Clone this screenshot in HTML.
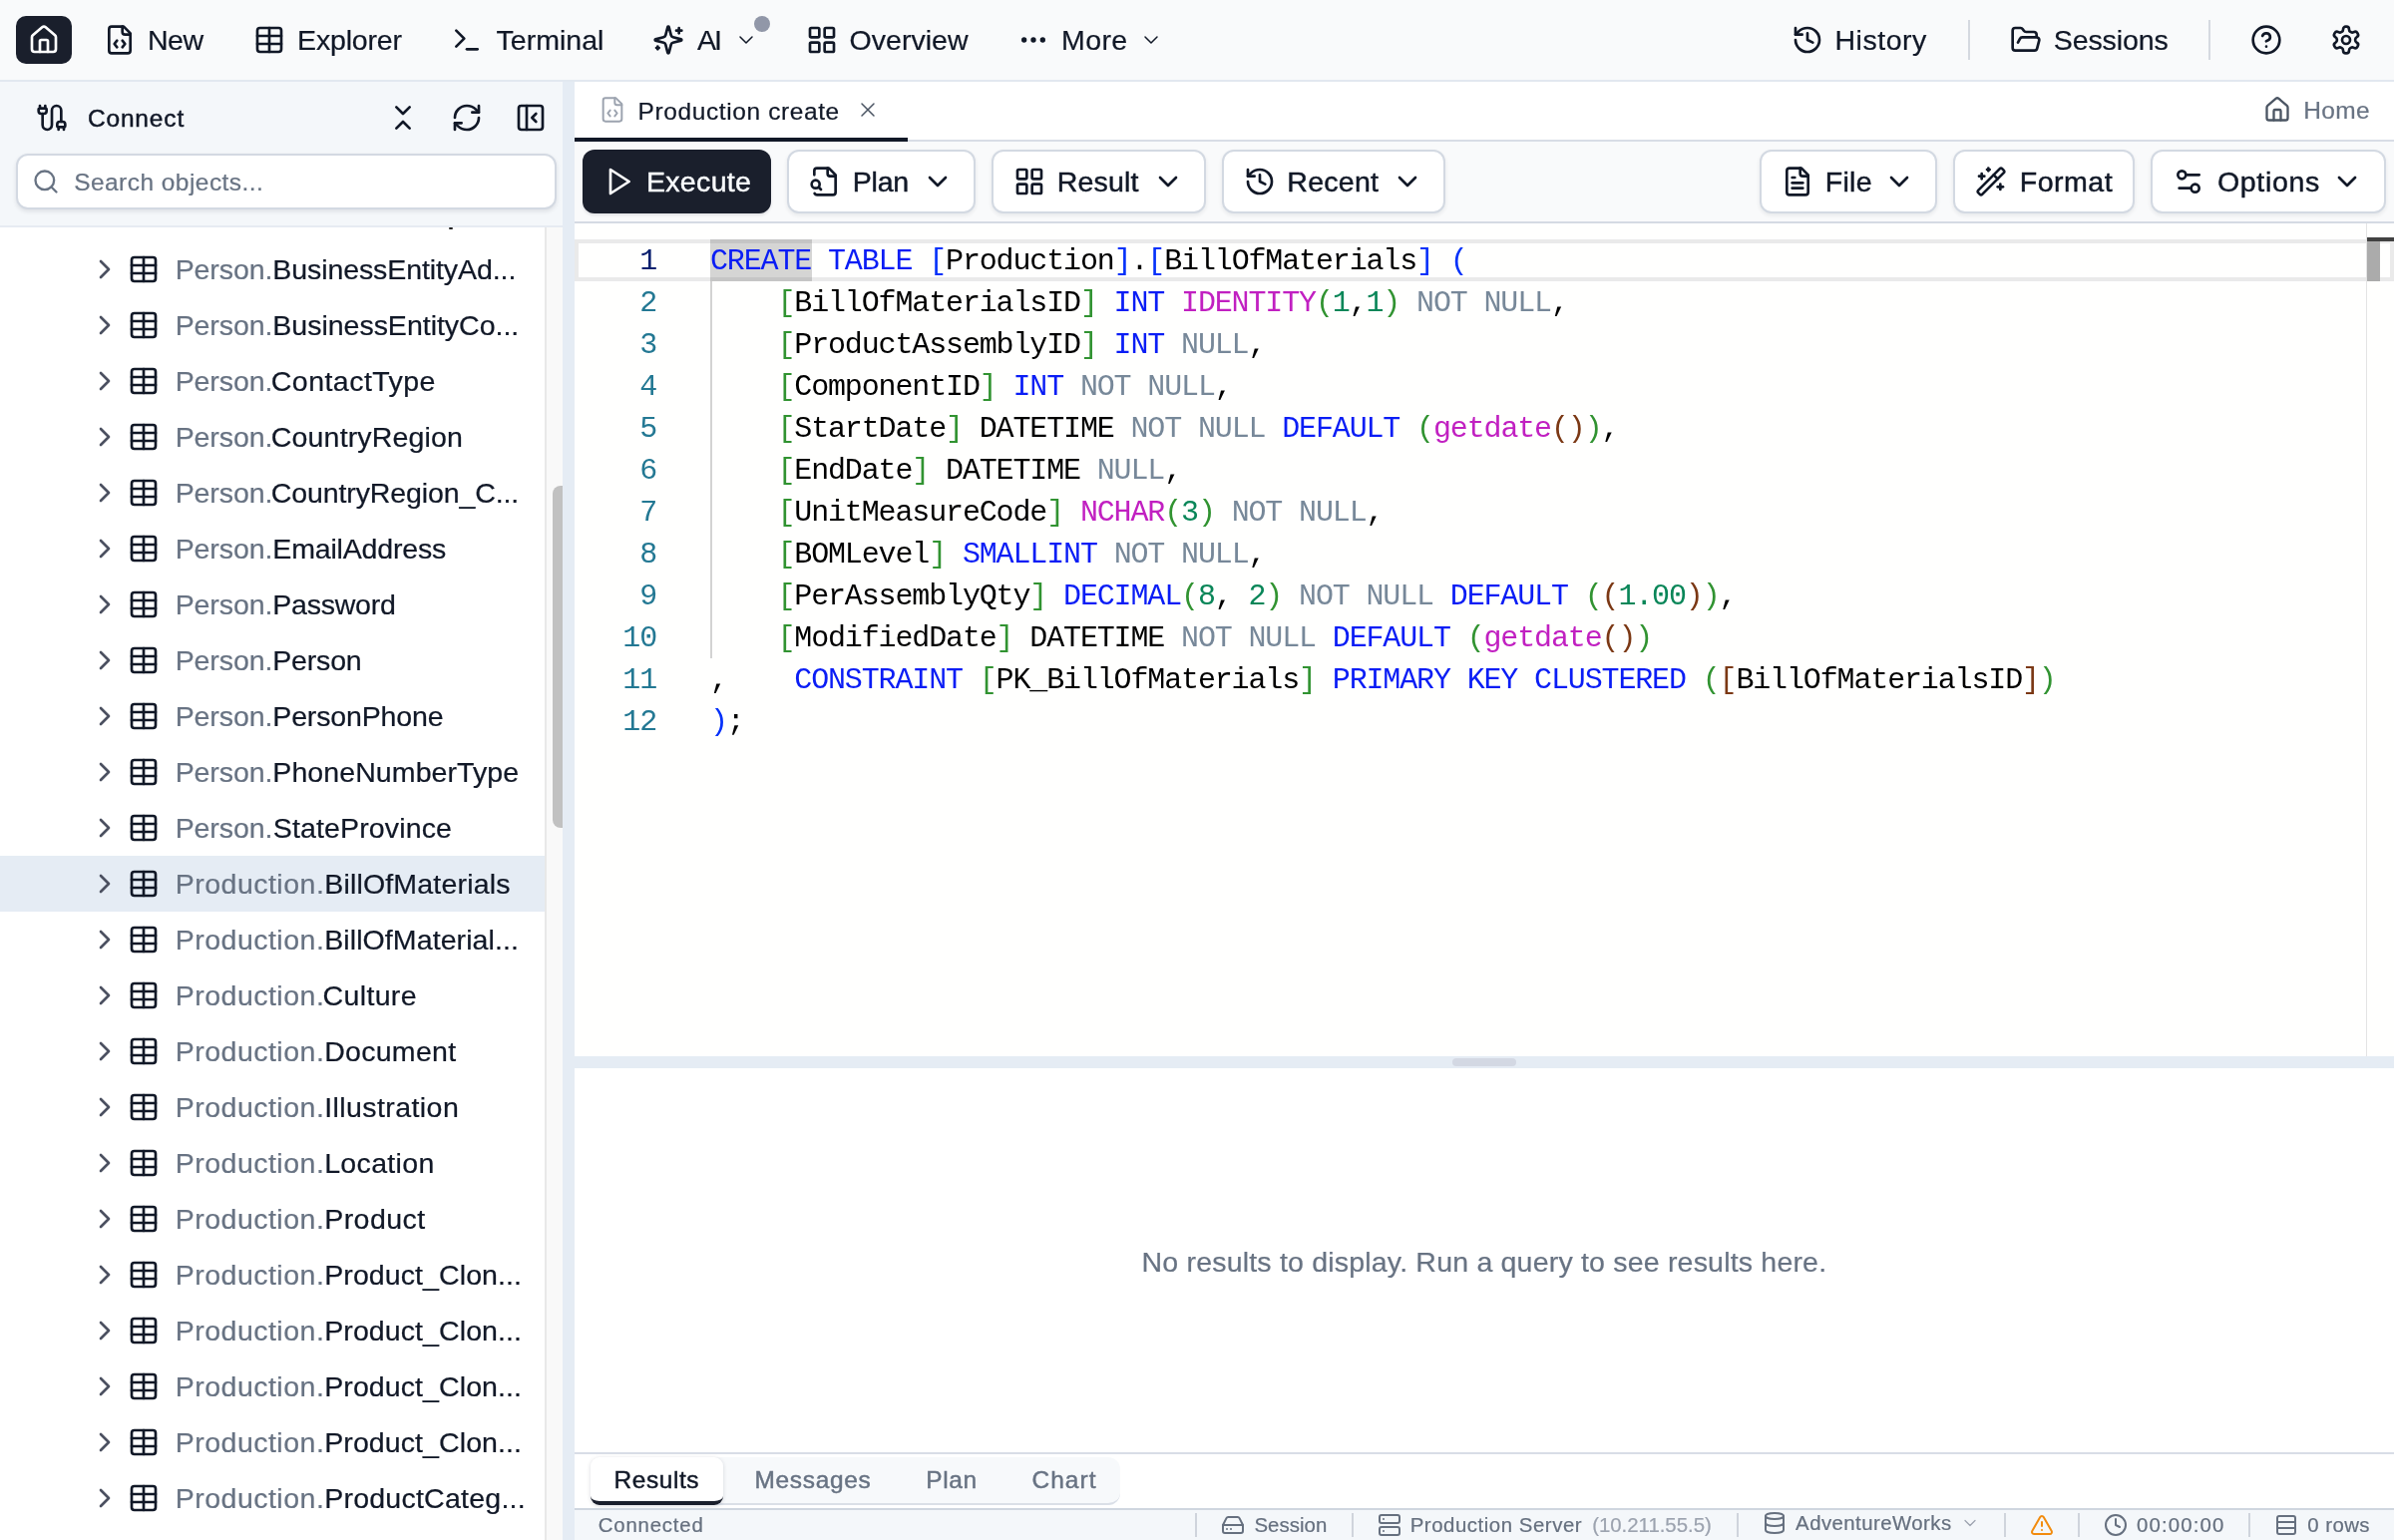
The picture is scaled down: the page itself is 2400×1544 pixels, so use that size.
<!DOCTYPE html>
<html><head><meta charset="utf-8"><title>SQL Editor</title>
<style>
html,body{margin:0;padding:0;}
body{width:2400px;height:1544px;position:relative;overflow:hidden;background:#ffffff;font-family:"Liberation Sans",sans-serif;}
#root{position:absolute;left:0;top:0;width:2400px;height:1544px;will-change:transform;}
.b{position:absolute;}
.ic{position:absolute;fill:none;stroke:currentColor;stroke-linecap:round;stroke-linejoin:round;overflow:visible;}
.t{position:absolute;white-space:pre;line-height:40px;height:40px;}
.t{-webkit-text-stroke:0.22px currentColor;}
.med{-webkit-text-stroke:0.45px currentColor;}
.ln{position:absolute;left:576px;width:82px;text-align:right;height:42px;line-height:42px;font-family:"Liberation Mono",monospace;font-size:30px;letter-spacing:-1.145px;}
.cl{position:absolute;left:712px;height:42px;line-height:42px;font-family:"Liberation Mono",monospace;font-size:30px;white-space:pre;letter-spacing:-1.145px;}
</style></head>
<body>
<div id="root">
<div class="b" style="left:0px;top:0px;width:2400px;height:80px;background:#f9fafb;"></div>
<div class="b" style="left:0px;top:80px;width:2400px;height:2px;background:#e2e8f0;"></div>
<div class="b" style="left:16px;top:16px;width:56px;height:48px;background:#1a1f2c;border-radius:10px;"></div>
<svg class="ic" style="left:28px;top:24px;width:32px;height:32px;color:#ffffff;" viewBox="0 0 24 24" stroke-width="2"><path d="M15 21v-8a1 1 0 0 0-1-1h-4a1 1 0 0 0-1 1v8"/><path d="M3 10a2 2 0 0 1 .709-1.528l7-5.999a2 2 0 0 1 2.582 0l7 5.999A2 2 0 0 1 21 10v9a2 2 0 0 1-2 2H5a2 2 0 0 1-2-2z"/></svg>
<svg class="ic" style="left:104px;top:24px;width:32px;height:32px;color:#111827;" viewBox="0 0 24 24" stroke-width="2"><path d="M10 12.5 8 15l2 2.5"/><path d="m14 12.5 2 2.5-2 2.5"/><path d="M14 2v4a2 2 0 0 0 2 2h4"/><path d="M15 2H6a2 2 0 0 0-2 2v16a2 2 0 0 0 2 2h12a2 2 0 0 0 2-2V7z"/></svg>
<div class="t " style="left:147.90px;top:20px;font-size:28.56px;color:#111827;letter-spacing:-0.396px;">New</div>
<svg class="ic" style="left:254px;top:24px;width:32px;height:32px;color:#111827;" viewBox="0 0 24 24" stroke-width="2"><path d="M12 3v18"/><rect width="18" height="18" x="3" y="3" rx="2"/><path d="M3 9h18"/><path d="M3 15h18"/></svg>
<div class="t " style="left:298.10px;top:20px;font-size:28.56px;color:#111827;letter-spacing:-0.199px;">Explorer</div>
<svg class="ic" style="left:451.75px;top:24px;width:32px;height:32px;color:#111827;" viewBox="0 0 24 24" stroke-width="2"><polyline points="4 17 10 11 4 5"/><line x1="12" x2="20" y1="19" y2="19"/></svg>
<div class="t " style="left:497.50px;top:20px;font-size:28.56px;color:#111827;letter-spacing:-0.004px;">Terminal</div>
<svg class="ic" style="left:654px;top:24px;width:32px;height:32px;color:#111827;" viewBox="0 0 24 24" stroke-width="2"><path d="M9.937 15.5A2 2 0 0 0 8.5 14.063l-6.135-1.582a.5.5 0 0 1 0-.962L8.5 9.936A2 2 0 0 0 9.937 8.5l1.582-6.135a.5.5 0 0 1 .963 0L14.063 8.5A2 2 0 0 0 15.5 9.937l6.135 1.581a.5.5 0 0 1 0 .964L15.5 14.063a2 2 0 0 0-1.437 1.437l-1.582 6.135a.5.5 0 0 1-.963 0z"/><path d="M20 3v4"/><path d="M22 5h-4"/><path d="M4 17v2"/><path d="M5 18H3"/></svg>
<div class="t " style="left:699.00px;top:20px;font-size:28.56px;color:#111827;letter-spacing:-2.041px;">AI</div>
<svg class="ic" style="left:736.25px;top:27.75px;width:24px;height:24px;color:#111827;" viewBox="0 0 24 24" stroke-width="1.5"><path d="m6 9 6 6 6-6"/></svg>
<div class="b" style="left:756px;top:16px;width:16px;height:16px;background:#9197a8;border-radius:50%;"></div>
<svg class="ic" style="left:808px;top:24px;width:32px;height:32px;color:#111827;" viewBox="0 0 24 24" stroke-width="2"><rect width="7" height="7" x="3" y="3" rx="1"/><rect width="7" height="7" x="14" y="3" rx="1"/><rect width="7" height="7" x="14" y="14" rx="1"/><rect width="7" height="7" x="3" y="14" rx="1"/></svg>
<div class="t " style="left:851.60px;top:20px;font-size:28.56px;color:#111827;letter-spacing:0.007px;">Overview</div>
<svg class="ic" style="left:1019.75px;top:24px;width:32px;height:32px;color:#111827;" viewBox="0 0 24 24" stroke-width="2"><circle cx="12" cy="12" r="1"/><circle cx="19" cy="12" r="1"/><circle cx="5" cy="12" r="1"/></svg>
<div class="t " style="left:1064.00px;top:20px;font-size:28.56px;color:#111827;letter-spacing:0.379px;">More</div>
<svg class="ic" style="left:1141.5px;top:27.75px;width:24px;height:24px;color:#111827;" viewBox="0 0 24 24" stroke-width="1.5"><path d="m6 9 6 6 6-6"/></svg>
<svg class="ic" style="left:1795.5px;top:24px;width:32px;height:32px;color:#111827;" viewBox="0 0 24 24" stroke-width="2"><path d="M3 12a9 9 0 1 0 9-9 9.75 9.75 0 0 0-6.74 2.74L3 8"/><path d="M3 3v5h5"/><path d="M12 7v5l4 2"/></svg>
<div class="t " style="left:1839.50px;top:20px;font-size:28.56px;color:#111827;letter-spacing:0.492px;">History</div>
<div class="b" style="left:1973px;top:20px;width:2px;height:40px;background:#d5d9e0;"></div>
<svg class="ic" style="left:2014.5px;top:24px;width:32px;height:32px;color:#111827;" viewBox="0 0 24 24" stroke-width="2"><path d="m6 14 1.5-2.9A2 2 0 0 1 9.24 10H20a2 2 0 0 1 1.94 2.5l-1.54 6a2 2 0 0 1-1.95 1.5H4a2 2 0 0 1-2-2V5a2 2 0 0 1 2-2h3.9a2 2 0 0 1 1.69.9l.81 1.2a2 2 0 0 0 1.67.9H18a2 2 0 0 1 2 2v2"/></svg>
<div class="t " style="left:2058.80px;top:20px;font-size:28.56px;color:#111827;letter-spacing:-0.137px;">Sessions</div>
<div class="b" style="left:2214px;top:20px;width:2px;height:40px;background:#d5d9e0;"></div>
<svg class="ic" style="left:2256px;top:24px;width:32px;height:32px;color:#111827;" viewBox="0 0 24 24" stroke-width="2"><circle cx="12" cy="12" r="10"/><path d="M9.09 9a3 3 0 0 1 5.83 1c0 2-3 3-3 3"/><path d="M12 17h.01"/></svg>
<svg class="ic" style="left:2336px;top:24px;width:32px;height:32px;color:#111827;" viewBox="0 0 24 24" stroke-width="2"><path d="M12.22 2h-.44a2 2 0 0 0-2 2v.18a2 2 0 0 1-1 1.73l-.43.25a2 2 0 0 1-2 0l-.15-.08a2 2 0 0 0-2.73.73l-.22.38a2 2 0 0 0 .73 2.73l.15.1a2 2 0 0 1 1 1.72v.51a2 2 0 0 1-1 1.74l-.15.09a2 2 0 0 0-.73 2.73l.22.38a2 2 0 0 0 2.73.73l.15-.08a2 2 0 0 1 2 0l.43.25a2 2 0 0 1 1 1.73V20a2 2 0 0 0 2 2h.44a2 2 0 0 0 2-2v-.18a2 2 0 0 1 1-1.73l.43-.25a2 2 0 0 1 2 0l.15.08a2 2 0 0 0 2.73-.73l.22-.39a2 2 0 0 0-.73-2.73l-.15-.08a2 2 0 0 1-1-1.74v-.5a2 2 0 0 1 1-1.74l.15-.09a2 2 0 0 0 .73-2.73l-.22-.38a2 2 0 0 0-2.73-.73l-.15.08a2 2 0 0 1-2 0l-.43-.25a2 2 0 0 1-1-1.73V4a2 2 0 0 0-2-2z"/><circle cx="12" cy="12" r="3"/></svg>
<div class="b" style="left:0px;top:82px;width:564px;height:144px;background:#f4f7fa;"></div>
<div class="b" style="left:0px;top:226px;width:564px;height:2px;background:#e6ebf2;"></div>
<div class="b" style="left:0px;top:228px;width:546px;height:1316px;background:#ffffff;"></div>
<div class="b" style="left:546px;top:228px;width:18px;height:1316px;background:#f9f9f9;border-left:2px solid #e8e8e8;box-sizing:border-box;"></div>
<div class="b" style="left:554px;top:487px;width:10px;height:343px;background:#c1c1c1;border-radius:8px 0 0 8px;"></div>
<div class="b" style="left:564px;top:82px;width:12px;height:1462px;background:#e5ecf4;"></div>
<svg class="ic" style="left:36px;top:102px;width:32px;height:32px;color:#111827;" viewBox="0 0 24 24" stroke-width="2"><path d="M17 21v-2a1 1 0 0 1-1-1v-1a2 2 0 0 1 2-2h2a2 2 0 0 1 2 2v1a1 1 0 0 1-1 1"/><path d="M19 15V6.5a1 1 0 0 0-7 0v11a1 1 0 0 1-7 0V9"/><path d="M21 21v-2h-4"/><path d="M3 5h4V3"/><path d="M7 5a1 1 0 0 1 1 1v1a2 2 0 0 1-2 2H4a2 2 0 0 1-2-2V6a1 1 0 0 1 1-1V3"/></svg>
<div class="t med" style="left:87.90px;top:99px;font-size:24.48px;color:#111827;letter-spacing:0.860px;">Connect</div>
<svg class="ic" style="left:388.25px;top:102px;width:32px;height:32px;color:#111827;" viewBox="0 0 24 24" stroke-width="2"><path d="m7 20 5-5 5 5"/><path d="m7 4 5 5 5-5"/></svg>
<svg class="ic" style="left:452.25px;top:102px;width:32px;height:32px;color:#111827;" viewBox="0 0 24 24" stroke-width="2"><path d="M3 12a9 9 0 0 1 9-9 9.75 9.75 0 0 1 6.74 2.74L21 8"/><path d="M21 3v5h-5"/><path d="M21 12a9 9 0 0 1-9 9 9.75 9.75 0 0 1-6.74-2.74L3 16"/><path d="M8 16H3v5"/></svg>
<svg class="ic" style="left:516.25px;top:102px;width:32px;height:32px;color:#111827;" viewBox="0 0 24 24" stroke-width="2"><rect width="18" height="18" x="3" y="3" rx="2"/><path d="M9 3v18"/><path d="m16 15-3-3 3-3"/></svg>
<div class="b" style="left:16px;top:154px;width:542px;height:56px;background:#fff;border:2px solid #d3d9e2;border-radius:12px;box-sizing:border-box;box-shadow:0 2px 4px rgba(15,23,42,.10);"></div>
<svg class="ic" style="left:32px;top:168px;width:28px;height:28px;color:#687383;" viewBox="0 0 24 24" stroke-width="2"><circle cx="11" cy="11" r="8"/><path d="m21 21-4.3-4.3"/></svg>
<div class="t " style="left:74.20px;top:163px;font-size:24.48px;color:#687383;letter-spacing:0.466px;">Search objects...</div>
<div class="b" style="left:450px;top:228px;width:4px;height:1.5px;background:#222;border-radius:1px;"></div>
<svg class="ic" style="left:88.5px;top:254px;width:32px;height:32px;color:#4b5060;" viewBox="0 0 24 24" stroke-width="2"><path d="m9 18 6-6-6-6"/></svg>
<svg class="ic" style="left:128px;top:254px;width:32px;height:32px;color:#111827;" viewBox="0 0 24 24" stroke-width="2"><path d="M12 3v18"/><rect width="18" height="18" x="3" y="3" rx="2"/><path d="M3 9h18"/><path d="M3 15h18"/></svg>
<div class="t " style="left:175.70px;top:250px;font-size:28.56px;color:#687383;letter-spacing:-0.125px;">Person.</div>
<div class="t " style="left:273.30px;top:250px;font-size:28.56px;color:#111827;letter-spacing:-0.106px;">BusinessEntityAd...</div>
<svg class="ic" style="left:88.5px;top:310px;width:32px;height:32px;color:#4b5060;" viewBox="0 0 24 24" stroke-width="2"><path d="m9 18 6-6-6-6"/></svg>
<svg class="ic" style="left:128px;top:310px;width:32px;height:32px;color:#111827;" viewBox="0 0 24 24" stroke-width="2"><path d="M12 3v18"/><rect width="18" height="18" x="3" y="3" rx="2"/><path d="M3 9h18"/><path d="M3 15h18"/></svg>
<div class="t " style="left:175.70px;top:306px;font-size:28.56px;color:#687383;letter-spacing:-0.125px;">Person.</div>
<div class="t " style="left:273.30px;top:306px;font-size:28.56px;color:#111827;letter-spacing:-0.032px;">BusinessEntityCo...</div>
<svg class="ic" style="left:88.5px;top:366px;width:32px;height:32px;color:#4b5060;" viewBox="0 0 24 24" stroke-width="2"><path d="m9 18 6-6-6-6"/></svg>
<svg class="ic" style="left:128px;top:366px;width:32px;height:32px;color:#111827;" viewBox="0 0 24 24" stroke-width="2"><path d="M12 3v18"/><rect width="18" height="18" x="3" y="3" rx="2"/><path d="M3 9h18"/><path d="M3 15h18"/></svg>
<div class="t " style="left:175.70px;top:362px;font-size:28.56px;color:#687383;letter-spacing:-0.125px;">Person.</div>
<div class="t " style="left:271.80px;top:362px;font-size:28.56px;color:#111827;letter-spacing:0.441px;">ContactType</div>
<svg class="ic" style="left:88.5px;top:422px;width:32px;height:32px;color:#4b5060;" viewBox="0 0 24 24" stroke-width="2"><path d="m9 18 6-6-6-6"/></svg>
<svg class="ic" style="left:128px;top:422px;width:32px;height:32px;color:#111827;" viewBox="0 0 24 24" stroke-width="2"><path d="M12 3v18"/><rect width="18" height="18" x="3" y="3" rx="2"/><path d="M3 9h18"/><path d="M3 15h18"/></svg>
<div class="t " style="left:175.70px;top:418px;font-size:28.56px;color:#687383;letter-spacing:-0.125px;">Person.</div>
<div class="t " style="left:271.80px;top:418px;font-size:28.56px;color:#111827;letter-spacing:0.146px;">CountryRegion</div>
<svg class="ic" style="left:88.5px;top:478px;width:32px;height:32px;color:#4b5060;" viewBox="0 0 24 24" stroke-width="2"><path d="m9 18 6-6-6-6"/></svg>
<svg class="ic" style="left:128px;top:478px;width:32px;height:32px;color:#111827;" viewBox="0 0 24 24" stroke-width="2"><path d="M12 3v18"/><rect width="18" height="18" x="3" y="3" rx="2"/><path d="M3 9h18"/><path d="M3 15h18"/></svg>
<div class="t " style="left:175.70px;top:474px;font-size:28.56px;color:#687383;letter-spacing:-0.125px;">Person.</div>
<div class="t " style="left:271.80px;top:474px;font-size:28.56px;color:#111827;letter-spacing:-0.134px;">CountryRegion_C...</div>
<svg class="ic" style="left:88.5px;top:534px;width:32px;height:32px;color:#4b5060;" viewBox="0 0 24 24" stroke-width="2"><path d="m9 18 6-6-6-6"/></svg>
<svg class="ic" style="left:128px;top:534px;width:32px;height:32px;color:#111827;" viewBox="0 0 24 24" stroke-width="2"><path d="M12 3v18"/><rect width="18" height="18" x="3" y="3" rx="2"/><path d="M3 9h18"/><path d="M3 15h18"/></svg>
<div class="t " style="left:175.70px;top:530px;font-size:28.56px;color:#687383;letter-spacing:-0.125px;">Person.</div>
<div class="t " style="left:273.30px;top:530px;font-size:28.56px;color:#111827;letter-spacing:-0.194px;">EmailAddress</div>
<svg class="ic" style="left:88.5px;top:590px;width:32px;height:32px;color:#4b5060;" viewBox="0 0 24 24" stroke-width="2"><path d="m9 18 6-6-6-6"/></svg>
<svg class="ic" style="left:128px;top:590px;width:32px;height:32px;color:#111827;" viewBox="0 0 24 24" stroke-width="2"><path d="M12 3v18"/><rect width="18" height="18" x="3" y="3" rx="2"/><path d="M3 9h18"/><path d="M3 15h18"/></svg>
<div class="t " style="left:175.70px;top:586px;font-size:28.56px;color:#687383;letter-spacing:-0.125px;">Person.</div>
<div class="t " style="left:273.30px;top:586px;font-size:28.56px;color:#111827;letter-spacing:-0.252px;">Password</div>
<svg class="ic" style="left:88.5px;top:646px;width:32px;height:32px;color:#4b5060;" viewBox="0 0 24 24" stroke-width="2"><path d="m9 18 6-6-6-6"/></svg>
<svg class="ic" style="left:128px;top:646px;width:32px;height:32px;color:#111827;" viewBox="0 0 24 24" stroke-width="2"><path d="M12 3v18"/><rect width="18" height="18" x="3" y="3" rx="2"/><path d="M3 9h18"/><path d="M3 15h18"/></svg>
<div class="t " style="left:175.70px;top:642px;font-size:28.56px;color:#687383;letter-spacing:-0.125px;">Person.</div>
<div class="t " style="left:273.30px;top:642px;font-size:28.56px;color:#111827;letter-spacing:-0.215px;">Person</div>
<svg class="ic" style="left:88.5px;top:702px;width:32px;height:32px;color:#4b5060;" viewBox="0 0 24 24" stroke-width="2"><path d="m9 18 6-6-6-6"/></svg>
<svg class="ic" style="left:128px;top:702px;width:32px;height:32px;color:#111827;" viewBox="0 0 24 24" stroke-width="2"><path d="M12 3v18"/><rect width="18" height="18" x="3" y="3" rx="2"/><path d="M3 9h18"/><path d="M3 15h18"/></svg>
<div class="t " style="left:175.70px;top:698px;font-size:28.56px;color:#687383;letter-spacing:-0.125px;">Person.</div>
<div class="t " style="left:273.30px;top:698px;font-size:28.56px;color:#111827;letter-spacing:-0.172px;">PersonPhone</div>
<svg class="ic" style="left:88.5px;top:758px;width:32px;height:32px;color:#4b5060;" viewBox="0 0 24 24" stroke-width="2"><path d="m9 18 6-6-6-6"/></svg>
<svg class="ic" style="left:128px;top:758px;width:32px;height:32px;color:#111827;" viewBox="0 0 24 24" stroke-width="2"><path d="M12 3v18"/><rect width="18" height="18" x="3" y="3" rx="2"/><path d="M3 9h18"/><path d="M3 15h18"/></svg>
<div class="t " style="left:175.70px;top:754px;font-size:28.56px;color:#687383;letter-spacing:-0.125px;">Person.</div>
<div class="t " style="left:273.30px;top:754px;font-size:28.56px;color:#111827;letter-spacing:0.065px;">PhoneNumberType</div>
<svg class="ic" style="left:88.5px;top:814px;width:32px;height:32px;color:#4b5060;" viewBox="0 0 24 24" stroke-width="2"><path d="m9 18 6-6-6-6"/></svg>
<svg class="ic" style="left:128px;top:814px;width:32px;height:32px;color:#111827;" viewBox="0 0 24 24" stroke-width="2"><path d="M12 3v18"/><rect width="18" height="18" x="3" y="3" rx="2"/><path d="M3 9h18"/><path d="M3 15h18"/></svg>
<div class="t " style="left:175.70px;top:810px;font-size:28.56px;color:#687383;letter-spacing:-0.125px;">Person.</div>
<div class="t " style="left:273.80px;top:810px;font-size:28.56px;color:#111827;letter-spacing:0.121px;">StateProvince</div>
<div class="b" style="left:0px;top:858px;width:546px;height:56px;background:#e5ecf4;"></div>
<svg class="ic" style="left:88.5px;top:870px;width:32px;height:32px;color:#4b5060;" viewBox="0 0 24 24" stroke-width="2"><path d="m9 18 6-6-6-6"/></svg>
<svg class="ic" style="left:128px;top:870px;width:32px;height:32px;color:#111827;" viewBox="0 0 24 24" stroke-width="2"><path d="M12 3v18"/><rect width="18" height="18" x="3" y="3" rx="2"/><path d="M3 9h18"/><path d="M3 15h18"/></svg>
<div class="t " style="left:175.70px;top:866px;font-size:28.56px;color:#687383;letter-spacing:0.472px;">Production.</div>
<div class="t " style="left:325.20px;top:866px;font-size:28.56px;color:#111827;letter-spacing:0.162px;">BillOfMaterials</div>
<svg class="ic" style="left:88.5px;top:926px;width:32px;height:32px;color:#4b5060;" viewBox="0 0 24 24" stroke-width="2"><path d="m9 18 6-6-6-6"/></svg>
<svg class="ic" style="left:128px;top:926px;width:32px;height:32px;color:#111827;" viewBox="0 0 24 24" stroke-width="2"><path d="M12 3v18"/><rect width="18" height="18" x="3" y="3" rx="2"/><path d="M3 9h18"/><path d="M3 15h18"/></svg>
<div class="t " style="left:175.70px;top:922px;font-size:28.56px;color:#687383;letter-spacing:0.472px;">Production.</div>
<div class="t " style="left:325.20px;top:922px;font-size:28.56px;color:#111827;letter-spacing:0.075px;">BillOfMaterial...</div>
<svg class="ic" style="left:88.5px;top:982px;width:32px;height:32px;color:#4b5060;" viewBox="0 0 24 24" stroke-width="2"><path d="m9 18 6-6-6-6"/></svg>
<svg class="ic" style="left:128px;top:982px;width:32px;height:32px;color:#111827;" viewBox="0 0 24 24" stroke-width="2"><path d="M12 3v18"/><rect width="18" height="18" x="3" y="3" rx="2"/><path d="M3 9h18"/><path d="M3 15h18"/></svg>
<div class="t " style="left:175.70px;top:978px;font-size:28.56px;color:#687383;letter-spacing:0.472px;">Production.</div>
<div class="t " style="left:323.60px;top:978px;font-size:28.56px;color:#111827;letter-spacing:0.325px;">Culture</div>
<svg class="ic" style="left:88.5px;top:1038px;width:32px;height:32px;color:#4b5060;" viewBox="0 0 24 24" stroke-width="2"><path d="m9 18 6-6-6-6"/></svg>
<svg class="ic" style="left:128px;top:1038px;width:32px;height:32px;color:#111827;" viewBox="0 0 24 24" stroke-width="2"><path d="M12 3v18"/><rect width="18" height="18" x="3" y="3" rx="2"/><path d="M3 9h18"/><path d="M3 15h18"/></svg>
<div class="t " style="left:175.70px;top:1034px;font-size:28.56px;color:#687383;letter-spacing:0.472px;">Production.</div>
<div class="t " style="left:325.20px;top:1034px;font-size:28.56px;color:#111827;letter-spacing:0.261px;">Document</div>
<svg class="ic" style="left:88.5px;top:1094px;width:32px;height:32px;color:#4b5060;" viewBox="0 0 24 24" stroke-width="2"><path d="m9 18 6-6-6-6"/></svg>
<svg class="ic" style="left:128px;top:1094px;width:32px;height:32px;color:#111827;" viewBox="0 0 24 24" stroke-width="2"><path d="M12 3v18"/><rect width="18" height="18" x="3" y="3" rx="2"/><path d="M3 9h18"/><path d="M3 15h18"/></svg>
<div class="t " style="left:175.70px;top:1090px;font-size:28.56px;color:#687383;letter-spacing:0.472px;">Production.</div>
<div class="t " style="left:325.20px;top:1090px;font-size:28.56px;color:#111827;letter-spacing:0.406px;">Illustration</div>
<svg class="ic" style="left:88.5px;top:1150px;width:32px;height:32px;color:#4b5060;" viewBox="0 0 24 24" stroke-width="2"><path d="m9 18 6-6-6-6"/></svg>
<svg class="ic" style="left:128px;top:1150px;width:32px;height:32px;color:#111827;" viewBox="0 0 24 24" stroke-width="2"><path d="M12 3v18"/><rect width="18" height="18" x="3" y="3" rx="2"/><path d="M3 9h18"/><path d="M3 15h18"/></svg>
<div class="t " style="left:175.70px;top:1146px;font-size:28.56px;color:#687383;letter-spacing:0.472px;">Production.</div>
<div class="t " style="left:325.20px;top:1146px;font-size:28.56px;color:#111827;letter-spacing:0.307px;">Location</div>
<svg class="ic" style="left:88.5px;top:1206px;width:32px;height:32px;color:#4b5060;" viewBox="0 0 24 24" stroke-width="2"><path d="m9 18 6-6-6-6"/></svg>
<svg class="ic" style="left:128px;top:1206px;width:32px;height:32px;color:#111827;" viewBox="0 0 24 24" stroke-width="2"><path d="M12 3v18"/><rect width="18" height="18" x="3" y="3" rx="2"/><path d="M3 9h18"/><path d="M3 15h18"/></svg>
<div class="t " style="left:175.70px;top:1202px;font-size:28.56px;color:#687383;letter-spacing:0.472px;">Production.</div>
<div class="t " style="left:325.20px;top:1202px;font-size:28.56px;color:#111827;letter-spacing:0.442px;">Product</div>
<svg class="ic" style="left:88.5px;top:1262px;width:32px;height:32px;color:#4b5060;" viewBox="0 0 24 24" stroke-width="2"><path d="m9 18 6-6-6-6"/></svg>
<svg class="ic" style="left:128px;top:1262px;width:32px;height:32px;color:#111827;" viewBox="0 0 24 24" stroke-width="2"><path d="M12 3v18"/><rect width="18" height="18" x="3" y="3" rx="2"/><path d="M3 9h18"/><path d="M3 15h18"/></svg>
<div class="t " style="left:175.70px;top:1258px;font-size:28.56px;color:#687383;letter-spacing:0.472px;">Production.</div>
<div class="t " style="left:325.20px;top:1258px;font-size:28.56px;color:#111827;letter-spacing:0.076px;">Product_Clon...</div>
<svg class="ic" style="left:88.5px;top:1318px;width:32px;height:32px;color:#4b5060;" viewBox="0 0 24 24" stroke-width="2"><path d="m9 18 6-6-6-6"/></svg>
<svg class="ic" style="left:128px;top:1318px;width:32px;height:32px;color:#111827;" viewBox="0 0 24 24" stroke-width="2"><path d="M12 3v18"/><rect width="18" height="18" x="3" y="3" rx="2"/><path d="M3 9h18"/><path d="M3 15h18"/></svg>
<div class="t " style="left:175.70px;top:1314px;font-size:28.56px;color:#687383;letter-spacing:0.472px;">Production.</div>
<div class="t " style="left:325.20px;top:1314px;font-size:28.56px;color:#111827;letter-spacing:0.076px;">Product_Clon...</div>
<svg class="ic" style="left:88.5px;top:1374px;width:32px;height:32px;color:#4b5060;" viewBox="0 0 24 24" stroke-width="2"><path d="m9 18 6-6-6-6"/></svg>
<svg class="ic" style="left:128px;top:1374px;width:32px;height:32px;color:#111827;" viewBox="0 0 24 24" stroke-width="2"><path d="M12 3v18"/><rect width="18" height="18" x="3" y="3" rx="2"/><path d="M3 9h18"/><path d="M3 15h18"/></svg>
<div class="t " style="left:175.70px;top:1370px;font-size:28.56px;color:#687383;letter-spacing:0.472px;">Production.</div>
<div class="t " style="left:325.20px;top:1370px;font-size:28.56px;color:#111827;letter-spacing:0.076px;">Product_Clon...</div>
<svg class="ic" style="left:88.5px;top:1430px;width:32px;height:32px;color:#4b5060;" viewBox="0 0 24 24" stroke-width="2"><path d="m9 18 6-6-6-6"/></svg>
<svg class="ic" style="left:128px;top:1430px;width:32px;height:32px;color:#111827;" viewBox="0 0 24 24" stroke-width="2"><path d="M12 3v18"/><rect width="18" height="18" x="3" y="3" rx="2"/><path d="M3 9h18"/><path d="M3 15h18"/></svg>
<div class="t " style="left:175.70px;top:1426px;font-size:28.56px;color:#687383;letter-spacing:0.472px;">Production.</div>
<div class="t " style="left:325.20px;top:1426px;font-size:28.56px;color:#111827;letter-spacing:0.076px;">Product_Clon...</div>
<svg class="ic" style="left:88.5px;top:1486px;width:32px;height:32px;color:#4b5060;" viewBox="0 0 24 24" stroke-width="2"><path d="m9 18 6-6-6-6"/></svg>
<svg class="ic" style="left:128px;top:1486px;width:32px;height:32px;color:#111827;" viewBox="0 0 24 24" stroke-width="2"><path d="M12 3v18"/><rect width="18" height="18" x="3" y="3" rx="2"/><path d="M3 9h18"/><path d="M3 15h18"/></svg>
<div class="t " style="left:175.70px;top:1482px;font-size:28.56px;color:#687383;letter-spacing:0.472px;">Production.</div>
<div class="t " style="left:325.20px;top:1482px;font-size:28.56px;color:#111827;letter-spacing:0.220px;">ProductCateg...</div>
<div class="b" style="left:576px;top:82px;width:1824px;height:58px;background:#ffffff;"></div>
<div class="b" style="left:576px;top:140px;width:1824px;height:2px;background:#d8dde6;"></div>
<div class="b" style="left:576px;top:138px;width:334px;height:4px;background:#111827;"></div>
<svg class="ic" style="left:600px;top:96px;width:28px;height:28px;color:#9ca3af;" viewBox="0 0 24 24" stroke-width="1.7"><path d="M10 12.5 8 15l2 2.5"/><path d="m14 12.5 2 2.5-2 2.5"/><path d="M14 2v4a2 2 0 0 0 2 2h4"/><path d="M15 2H6a2 2 0 0 0-2 2v16a2 2 0 0 0 2 2h12a2 2 0 0 0 2-2V7z"/></svg>
<div class="t " style="left:639.60px;top:92px;font-size:24.48px;color:#111827;letter-spacing:0.614px;">Production create</div>
<svg class="ic" style="left:858.3px;top:98.2px;width:24px;height:24px;color:#4b5563;" viewBox="0 0 24 24" stroke-width="1.5"><path d="M18 6 6 18"/><path d="m6 6 12 12"/></svg>
<svg class="ic" style="left:2268.6px;top:95.5px;width:28px;height:28px;color:#4b5563;" viewBox="0 0 24 24" stroke-width="2"><path d="M15 21v-8a1 1 0 0 0-1-1h-4a1 1 0 0 0-1 1v8"/><path d="M3 10a2 2 0 0 1 .709-1.528l7-5.999a2 2 0 0 1 2.582 0l7 5.999A2 2 0 0 1 21 10v9a2 2 0 0 1-2 2H5a2 2 0 0 1-2-2z"/></svg>
<div class="t " style="left:2309.20px;top:91px;font-size:24.48px;color:#687383;letter-spacing:0.379px;">Home</div>
<div class="b" style="left:576px;top:142px;width:1824px;height:80px;background:#f9fafb;"></div>
<div class="b" style="left:576px;top:222px;width:1824px;height:2px;background:#d5dae3;"></div>
<div class="b" style="left:584px;top:150px;width:189px;height:64px;background:#1a1f2c;border-radius:12px;box-shadow:0 2px 3px rgba(15,23,42,.1);"></div>
<svg class="ic" style="left:604px;top:166px;width:32px;height:32px;color:#fff;" viewBox="0 0 24 24" stroke-width="2"><polygon points="6 3 20 12 6 21 6 3"/></svg>
<div class="t med" style="left:647.90px;top:162px;font-size:28.56px;color:#f8fafc;letter-spacing:0.321px;">Execute</div>
<div class="b" style="left:789px;top:150px;width:189px;height:64px;background:#fff;border:2px solid #d3d9e2;border-radius:12px;box-sizing:border-box;box-shadow:0 2px 4px rgba(15,23,42,.08);"></div>
<svg class="ic" style="left:811px;top:166px;width:32px;height:32px;color:#111827;" viewBox="0 0 24 24" stroke-width="2"><path d="M14 2v4a2 2 0 0 0 2 2h4"/><path d="M4.268 21a2 2 0 0 0 1.727 1H18a2 2 0 0 0 2-2V7l-5-5H6a2 2 0 0 0-2 2v3"/><path d="m9 18-1.5-1.5"/><circle cx="5" cy="14" r="3"/></svg>
<div class="t med" style="left:854.70px;top:162px;font-size:28.56px;color:#111827;letter-spacing:-0.220px;">Plan</div>
<svg class="ic" style="left:924.3px;top:166px;width:32px;height:32px;color:#111827;" viewBox="0 0 24 24" stroke-width="2"><path d="m6 9 6 6 6-6"/></svg>
<div class="b" style="left:994px;top:150px;width:215px;height:64px;background:#fff;border:2px solid #d3d9e2;border-radius:12px;box-sizing:border-box;box-shadow:0 2px 4px rgba(15,23,42,.08);"></div>
<svg class="ic" style="left:1016px;top:166px;width:32px;height:32px;color:#111827;" viewBox="0 0 24 24" stroke-width="2"><rect width="7" height="7" x="3" y="3" rx="1"/><rect width="7" height="7" x="14" y="3" rx="1"/><rect width="7" height="7" x="14" y="14" rx="1"/><rect width="7" height="7" x="3" y="14" rx="1"/></svg>
<div class="t med" style="left:1059.70px;top:162px;font-size:28.56px;color:#111827;letter-spacing:0.183px;">Result</div>
<svg class="ic" style="left:1155px;top:166px;width:32px;height:32px;color:#111827;" viewBox="0 0 24 24" stroke-width="2"><path d="m6 9 6 6 6-6"/></svg>
<div class="b" style="left:1225px;top:150px;width:224px;height:64px;background:#fff;border:2px solid #d3d9e2;border-radius:12px;box-sizing:border-box;box-shadow:0 2px 4px rgba(15,23,42,.08);"></div>
<svg class="ic" style="left:1247px;top:166px;width:32px;height:32px;color:#111827;" viewBox="0 0 24 24" stroke-width="2"><path d="M3 12a9 9 0 1 0 9-9 9.75 9.75 0 0 0-6.74 2.74L3 8"/><path d="M3 3v5h5"/><path d="M12 7v5l4 2"/></svg>
<div class="t med" style="left:1290.30px;top:162px;font-size:28.56px;color:#111827;letter-spacing:0.256px;">Recent</div>
<svg class="ic" style="left:1395px;top:166px;width:32px;height:32px;color:#111827;" viewBox="0 0 24 24" stroke-width="2"><path d="m6 9 6 6 6-6"/></svg>
<div class="b" style="left:1764px;top:150px;width:178px;height:64px;background:#fff;border:2px solid #d3d9e2;border-radius:12px;box-sizing:border-box;box-shadow:0 2px 4px rgba(15,23,42,.08);"></div>
<svg class="ic" style="left:1786px;top:166px;width:32px;height:32px;color:#111827;" viewBox="0 0 24 24" stroke-width="2"><path d="M15 2H6a2 2 0 0 0-2 2v16a2 2 0 0 0 2 2h12a2 2 0 0 0 2-2V7Z"/><path d="M14 2v4a2 2 0 0 0 2 2h4"/><path d="M10 9H8"/><path d="M16 13H8"/><path d="M16 17H8"/></svg>
<div class="t med" style="left:1829.80px;top:162px;font-size:28.56px;color:#111827;letter-spacing:0.259px;">File</div>
<svg class="ic" style="left:1888.3px;top:166px;width:32px;height:32px;color:#111827;" viewBox="0 0 24 24" stroke-width="2"><path d="m6 9 6 6 6-6"/></svg>
<div class="b" style="left:1958px;top:150px;width:182px;height:64px;background:#fff;border:2px solid #d3d9e2;border-radius:12px;box-sizing:border-box;box-shadow:0 2px 4px rgba(15,23,42,.08);"></div>
<svg class="ic" style="left:1980px;top:166px;width:32px;height:32px;color:#111827;" viewBox="0 0 24 24" stroke-width="2"><path d="m21.64 3.64-1.28-1.28a1.21 1.21 0 0 0-1.72 0L2.36 18.64a1.21 1.21 0 0 0 0 1.72l1.28 1.28a1.2 1.2 0 0 0 1.72 0L21.64 5.36a1.2 1.2 0 0 0 0-1.72"/><path d="m14 7 3 3"/><path d="M5 6v4"/><path d="M19 14v4"/><path d="M10 2v2"/><path d="M7 8H3"/><path d="M21 16h-4"/><path d="M11 3H9"/></svg>
<div class="t med" style="left:2024.70px;top:162px;font-size:28.56px;color:#111827;letter-spacing:0.505px;">Format</div>
<div class="b" style="left:2156px;top:150px;width:236px;height:64px;background:#fff;border:2px solid #d3d9e2;border-radius:12px;box-sizing:border-box;box-shadow:0 2px 4px rgba(15,23,42,.08);"></div>
<svg class="ic" style="left:2178px;top:166px;width:32px;height:32px;color:#111827;" viewBox="0 0 24 24" stroke-width="2"><path d="M20 7h-9"/><path d="M14 17H5"/><circle cx="17" cy="17" r="3"/><circle cx="7" cy="7" r="3"/></svg>
<div class="t med" style="left:2222.90px;top:162px;font-size:28.56px;color:#111827;letter-spacing:0.665px;">Options</div>
<svg class="ic" style="left:2337px;top:166px;width:32px;height:32px;color:#111827;" viewBox="0 0 24 24" stroke-width="2"><path d="m6 9 6 6 6-6"/></svg>
<div class="b" style="left:576px;top:224px;width:1824px;height:835px;background:#fffffe;"></div>
<div class="b" style="left:576px;top:240px;width:1824px;height:42px;border:4px solid #eaeaea;box-sizing:border-box;"></div>
<div class="b" style="left:712px;top:240px;width:102px;height:42px;background:rgba(87,87,87,.25);"></div>
<div class="b" style="left:712px;top:282px;width:2px;height:378px;background:#d3d3d3;"></div>
<div class="b" style="left:2372px;top:224px;width:1px;height:835px;background:#e4e4e4;"></div>
<div class="b" style="left:2373px;top:240px;width:13px;height:42px;background:#ababab;"></div>
<div class="b" style="left:2373px;top:238px;width:27px;height:4px;background:#424242;"></div>
<div class="ln" style="top:241px;color:#0b216f">1</div>
<div class="cl" style="top:241px"><span style="color:#0a1df5">CREATE</span><span style="color:#000000"> </span><span style="color:#0a1df5">TABLE</span><span style="color:#000000"> </span><span style="color:#0431fa">[</span><span style="color:#000000">Production</span><span style="color:#0431fa">]</span><span style="color:#000000">.</span><span style="color:#0431fa">[</span><span style="color:#000000">BillOfMaterials</span><span style="color:#0431fa">]</span><span style="color:#000000"> </span><span style="color:#0431fa">(</span></div>
<div class="ln" style="top:283px;color:#237893">2</div>
<div class="cl" style="top:283px"><span style="color:#000000">    </span><span style="color:#319331">[</span><span style="color:#000000">BillOfMaterialsID</span><span style="color:#319331">]</span><span style="color:#000000"> </span><span style="color:#0a1df5">INT</span><span style="color:#000000"> </span><span style="color:#c120c1">IDENTITY</span><span style="color:#319331">(</span><span style="color:#098658">1</span><span style="color:#000000">,</span><span style="color:#098658">1</span><span style="color:#319331">)</span><span style="color:#000000"> </span><span style="color:#778899">NOT</span><span style="color:#000000"> </span><span style="color:#778899">NULL</span><span style="color:#000000">,</span></div>
<div class="ln" style="top:325px;color:#237893">3</div>
<div class="cl" style="top:325px"><span style="color:#000000">    </span><span style="color:#319331">[</span><span style="color:#000000">ProductAssemblyID</span><span style="color:#319331">]</span><span style="color:#000000"> </span><span style="color:#0a1df5">INT</span><span style="color:#000000"> </span><span style="color:#778899">NULL</span><span style="color:#000000">,</span></div>
<div class="ln" style="top:367px;color:#237893">4</div>
<div class="cl" style="top:367px"><span style="color:#000000">    </span><span style="color:#319331">[</span><span style="color:#000000">ComponentID</span><span style="color:#319331">]</span><span style="color:#000000"> </span><span style="color:#0a1df5">INT</span><span style="color:#000000"> </span><span style="color:#778899">NOT</span><span style="color:#000000"> </span><span style="color:#778899">NULL</span><span style="color:#000000">,</span></div>
<div class="ln" style="top:409px;color:#237893">5</div>
<div class="cl" style="top:409px"><span style="color:#000000">    </span><span style="color:#319331">[</span><span style="color:#000000">StartDate</span><span style="color:#319331">]</span><span style="color:#000000"> DATETIME </span><span style="color:#778899">NOT</span><span style="color:#000000"> </span><span style="color:#778899">NULL</span><span style="color:#000000"> </span><span style="color:#0a1df5">DEFAULT</span><span style="color:#000000"> </span><span style="color:#319331">(</span><span style="color:#c120c1">getdate</span><span style="color:#7b3814">()</span><span style="color:#319331">)</span><span style="color:#000000">,</span></div>
<div class="ln" style="top:451px;color:#237893">6</div>
<div class="cl" style="top:451px"><span style="color:#000000">    </span><span style="color:#319331">[</span><span style="color:#000000">EndDate</span><span style="color:#319331">]</span><span style="color:#000000"> DATETIME </span><span style="color:#778899">NULL</span><span style="color:#000000">,</span></div>
<div class="ln" style="top:493px;color:#237893">7</div>
<div class="cl" style="top:493px"><span style="color:#000000">    </span><span style="color:#319331">[</span><span style="color:#000000">UnitMeasureCode</span><span style="color:#319331">]</span><span style="color:#000000"> </span><span style="color:#c120c1">NCHAR</span><span style="color:#319331">(</span><span style="color:#098658">3</span><span style="color:#319331">)</span><span style="color:#000000"> </span><span style="color:#778899">NOT</span><span style="color:#000000"> </span><span style="color:#778899">NULL</span><span style="color:#000000">,</span></div>
<div class="ln" style="top:535px;color:#237893">8</div>
<div class="cl" style="top:535px"><span style="color:#000000">    </span><span style="color:#319331">[</span><span style="color:#000000">BOMLevel</span><span style="color:#319331">]</span><span style="color:#000000"> </span><span style="color:#0a1df5">SMALLINT</span><span style="color:#000000"> </span><span style="color:#778899">NOT</span><span style="color:#000000"> </span><span style="color:#778899">NULL</span><span style="color:#000000">,</span></div>
<div class="ln" style="top:577px;color:#237893">9</div>
<div class="cl" style="top:577px"><span style="color:#000000">    </span><span style="color:#319331">[</span><span style="color:#000000">PerAssemblyQty</span><span style="color:#319331">]</span><span style="color:#000000"> </span><span style="color:#0a1df5">DECIMAL</span><span style="color:#319331">(</span><span style="color:#098658">8</span><span style="color:#000000">, </span><span style="color:#098658">2</span><span style="color:#319331">)</span><span style="color:#000000"> </span><span style="color:#778899">NOT</span><span style="color:#000000"> </span><span style="color:#778899">NULL</span><span style="color:#000000"> </span><span style="color:#0a1df5">DEFAULT</span><span style="color:#000000"> </span><span style="color:#319331">(</span><span style="color:#7b3814">(</span><span style="color:#098658">1.00</span><span style="color:#7b3814">)</span><span style="color:#319331">)</span><span style="color:#000000">,</span></div>
<div class="ln" style="top:619px;color:#237893">10</div>
<div class="cl" style="top:619px"><span style="color:#000000">    </span><span style="color:#319331">[</span><span style="color:#000000">ModifiedDate</span><span style="color:#319331">]</span><span style="color:#000000"> DATETIME </span><span style="color:#778899">NOT</span><span style="color:#000000"> </span><span style="color:#778899">NULL</span><span style="color:#000000"> </span><span style="color:#0a1df5">DEFAULT</span><span style="color:#000000"> </span><span style="color:#319331">(</span><span style="color:#c120c1">getdate</span><span style="color:#7b3814">()</span><span style="color:#319331">)</span></div>
<div class="ln" style="top:661px;color:#237893">11</div>
<div class="cl" style="top:661px"><span style="color:#000000">,    </span><span style="color:#0a1df5">CONSTRAINT</span><span style="color:#000000"> </span><span style="color:#319331">[</span><span style="color:#000000">PK_BillOfMaterials</span><span style="color:#319331">]</span><span style="color:#000000"> </span><span style="color:#0a1df5">PRIMARY</span><span style="color:#000000"> </span><span style="color:#0a1df5">KEY</span><span style="color:#000000"> </span><span style="color:#0a1df5">CLUSTERED</span><span style="color:#000000"> </span><span style="color:#319331">(</span><span style="color:#7b3814">[</span><span style="color:#000000">BillOfMaterialsID</span><span style="color:#7b3814">]</span><span style="color:#319331">)</span></div>
<div class="ln" style="top:703px;color:#237893">12</div>
<div class="cl" style="top:703px"><span style="color:#0431fa">)</span><span style="color:#000000">;</span></div>
<div class="b" style="left:576px;top:1059px;width:1824px;height:12px;background:#e5ecf4;"></div>
<div class="b" style="left:1456px;top:1061px;width:64px;height:8px;background:#d3d8e3;border-radius:4px;"></div>
<div class="b" style="left:576px;top:1071px;width:1824px;height:385px;background:#ffffff;"></div>
<div class="t " style="left:1144.50px;top:1245px;font-size:28.56px;color:#687383;letter-spacing:0.178px;">No results to display. Run a query to see results here.</div>
<div class="b" style="left:576px;top:1456px;width:1824px;height:2px;background:#d8dde6;"></div>
<div class="b" style="left:576px;top:1458px;width:1824px;height:54px;background:#ffffff;"></div>
<div class="b" style="left:592px;top:1461px;width:531px;height:48px;background:#f7f9fb;border-radius:12px;border-bottom:2px solid #dadfe7;box-sizing:border-box;"></div>
<div class="b" style="left:592px;top:1461px;width:133px;height:48px;background:#fff;border-radius:9px;border-bottom:4px solid #1a1f2c;box-sizing:border-box;box-shadow:0 1px 4px rgba(15,23,42,.15);"></div>
<div class="t med" style="left:615.60px;top:1464px;font-size:24.48px;color:#111827;letter-spacing:0.557px;">Results</div>
<div class="t med" style="left:756.60px;top:1464px;font-size:24.48px;color:#687383;letter-spacing:0.645px;">Messages</div>
<div class="t med" style="left:928.30px;top:1464px;font-size:24.48px;color:#687383;letter-spacing:0.578px;">Plan</div>
<div class="t med" style="left:1034.50px;top:1464px;font-size:24.48px;color:#687383;letter-spacing:1.041px;">Chart</div>
<div class="b" style="left:576px;top:1512px;width:1824px;height:32px;background:#f4f7fa;"></div>
<div class="b" style="left:576px;top:1512px;width:1824px;height:2px;background:#cfd6df;"></div>
<div class="t " style="left:599.80px;top:1509px;font-size:20.4px;color:#66707f;letter-spacing:0.789px;">Connected</div>
<div class="b" style="left:1198px;top:1517px;width:2px;height:24px;background:#cfd4dc;"></div>
<svg class="ic" style="left:1224px;top:1517px;width:24px;height:24px;color:#66707f;" viewBox="0 0 24 24" stroke-width="2"><line x1="22" x2="2" y1="12" y2="12"/><path d="M5.45 5.11 2 12v6a2 2 0 0 0 2 2h16a2 2 0 0 0 2-2v-6l-3.45-6.89A2 2 0 0 0 16.76 4H7.24a2 2 0 0 0-1.79 1.11z"/><line x1="6" x2="6.01" y1="16" y2="16"/><line x1="10" x2="10.01" y1="16" y2="16"/></svg>
<div class="t " style="left:1257.40px;top:1509px;font-size:20.4px;color:#66707f;letter-spacing:0.066px;">Session</div>
<div class="b" style="left:1355px;top:1517px;width:2px;height:24px;background:#cfd4dc;"></div>
<svg class="ic" style="left:1381px;top:1517px;width:24px;height:24px;color:#66707f;" viewBox="0 0 24 24" stroke-width="2"><rect width="20" height="8" x="2" y="2" rx="2" ry="2"/><rect width="20" height="8" x="2" y="14" rx="2" ry="2"/><line x1="6" x2="6.01" y1="6" y2="6"/><line x1="6" x2="6.01" y1="18" y2="18"/></svg>
<div class="t " style="left:1413.70px;top:1509px;font-size:20.4px;color:#66707f;letter-spacing:0.543px;">Production Server</div>
<div class="t " style="left:1596.20px;top:1509px;font-size:20.4px;color:#9ca3af;letter-spacing:-0.016px;">(10.211.55.5)</div>
<div class="b" style="left:1741px;top:1517px;width:2px;height:24px;background:#cfd4dc;"></div>
<svg class="ic" style="left:1767px;top:1515px;width:24px;height:24px;color:#66707f;" viewBox="0 0 24 24" stroke-width="2"><ellipse cx="12" cy="5" rx="9" ry="3"/><path d="M3 5V19A9 3 0 0 0 21 19V5"/><path d="M3 12A9 3 0 0 0 21 12"/></svg>
<div class="t " style="left:1800.10px;top:1507px;font-size:20.4px;color:#66707f;letter-spacing:0.434px;">AdventureWorks</div>
<svg class="ic" style="left:1965.2px;top:1517.1px;width:20px;height:20px;color:#9ca3af;" viewBox="0 0 24 24" stroke-width="1.5"><path d="m6 9 6 6 6-6"/></svg>
<div class="b" style="left:2009px;top:1517px;width:2px;height:24px;background:#cfd4dc;"></div>
<svg class="ic" style="left:2035px;top:1517px;width:24px;height:24px;color:#f28c0f;" viewBox="0 0 24 24" stroke-width="2"><path d="m21.73 18-8-14a2 2 0 0 0-3.48 0l-8 14A2 2 0 0 0 4 21h16a2 2 0 0 0 1.73-3"/><path d="M12 9v4"/><path d="M12 17h.01"/></svg>
<div class="b" style="left:2083px;top:1517px;width:2px;height:24px;background:#cfd4dc;"></div>
<svg class="ic" style="left:2109px;top:1517px;width:24px;height:24px;color:#66707f;" viewBox="0 0 24 24" stroke-width="2"><circle cx="12" cy="12" r="10"/><polyline points="12 6 12 12 16 14"/></svg>
<div class="t " style="left:2142.00px;top:1509px;font-size:20.4px;color:#66707f;letter-spacing:1.124px;">00:00:00</div>
<div class="b" style="left:2254px;top:1517px;width:2px;height:24px;background:#cfd4dc;"></div>
<svg class="ic" style="left:2280px;top:1517px;width:24px;height:24px;color:#66707f;" viewBox="0 0 24 24" stroke-width="2"><rect width="18" height="18" x="3" y="3" rx="2"/><path d="M21 9H3"/><path d="M21 15H3"/></svg>
<div class="t " style="left:2313.30px;top:1509px;font-size:20.4px;color:#66707f;letter-spacing:0.428px;">0 rows</div>
</div>
</body></html>
